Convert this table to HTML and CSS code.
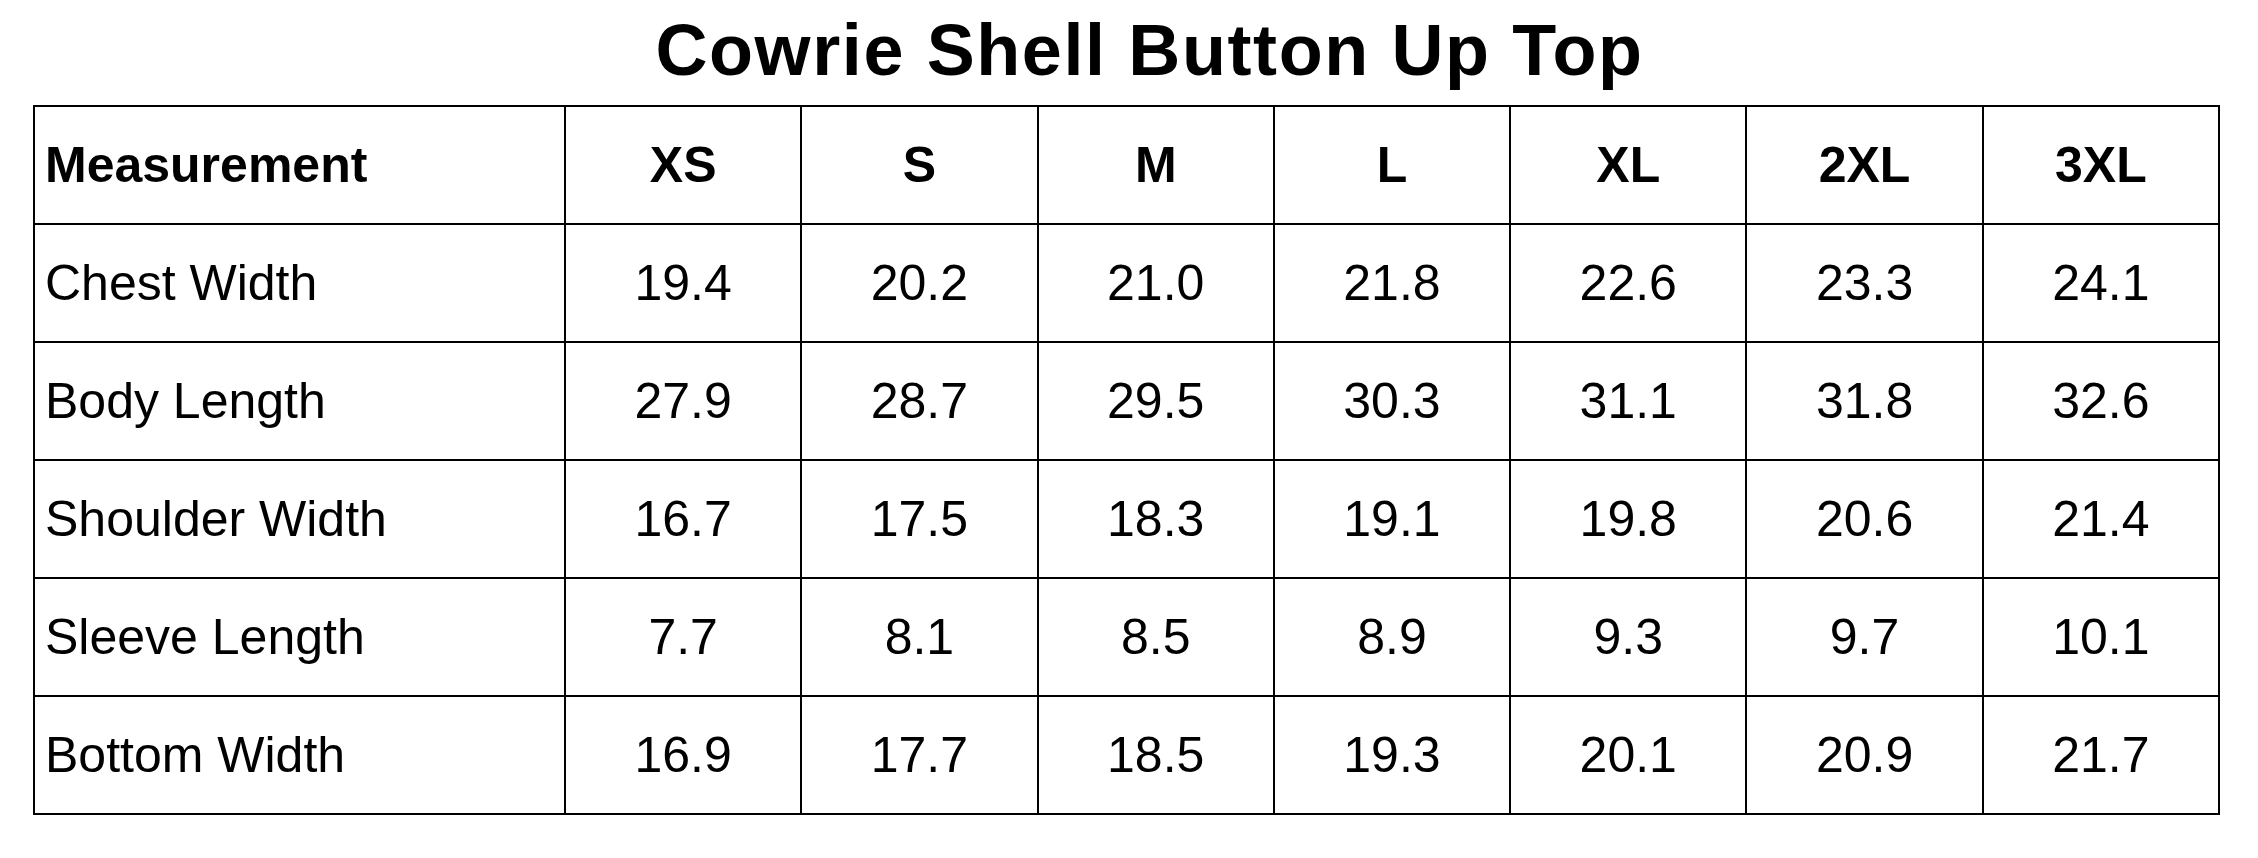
FILE: index.html
```html
<!DOCTYPE html>
<html lang="en">
<head>
<meta charset="utf-8">
<title>Cowrie Shell Button Up Top</title>
<link rel="stylesheet" href="styles.css">
</head>
<body>
<main class="page">
  <h1 class="title">Cowrie Shell Button Up Top</h1>
  <table class="size-table">
    <colgroup>
      <col class="col-label">
      <col><col><col><col><col><col><col>
    </colgroup>
    <thead>
      <tr>
        <th class="label">Measurement</th>
        <th>XS</th><th>S</th><th>M</th><th>L</th><th>XL</th><th>2XL</th><th>3XL</th>
      </tr>
    </thead>
    <tbody>
      <tr><td class="label">Chest Width</td><td>19.4</td><td>20.2</td><td>21.0</td><td>21.8</td><td>22.6</td><td>23.3</td><td>24.1</td></tr>
      <tr><td class="label">Body Length</td><td>27.9</td><td>28.7</td><td>29.5</td><td>30.3</td><td>31.1</td><td>31.8</td><td>32.6</td></tr>
      <tr><td class="label">Shoulder Width</td><td>16.7</td><td>17.5</td><td>18.3</td><td>19.1</td><td>19.8</td><td>20.6</td><td>21.4</td></tr>
      <tr><td class="label">Sleeve Length</td><td>7.7</td><td>8.1</td><td>8.5</td><td>8.9</td><td>9.3</td><td>9.7</td><td>10.1</td></tr>
      <tr><td class="label">Bottom Width</td><td>16.9</td><td>17.7</td><td>18.5</td><td>19.3</td><td>20.1</td><td>20.9</td><td>21.7</td></tr>
    </tbody>
  </table>
</main>
</body>
</html>
```
FILE: styles.css
```css
html, body {
  margin: 0;
  padding: 0;
  background: #ffffff;
}

body {
  font-family: "Liberation Sans", Arial, Helvetica, sans-serif;
  color: #000000;
}

.page {
  padding: 14px 38px 0 33px;
}

.title {
  margin: 0 0 19px 0;
  padding-left: 46px;
  font-size: 72px;
  line-height: 72px;
  font-weight: 700;
  text-align: center;
  letter-spacing: 1.6px;
}

.size-table {
  width: 2187px;
  border-collapse: collapse;
  table-layout: fixed;
  border: 2px solid #000;
}

.col-label {
  width: 531px;
}

.size-table tr {
  height: 118px;
}

.size-table th,
.size-table td {
  border: 2px solid #000;
  padding: 0;
  font-size: 50px;
  text-align: center;
  vertical-align: middle;
}

.size-table th {
  font-weight: 700;
}

.size-table td {
  font-weight: 400;
}

.size-table .label {
  text-align: left;
  padding-left: 10px;
}
```
